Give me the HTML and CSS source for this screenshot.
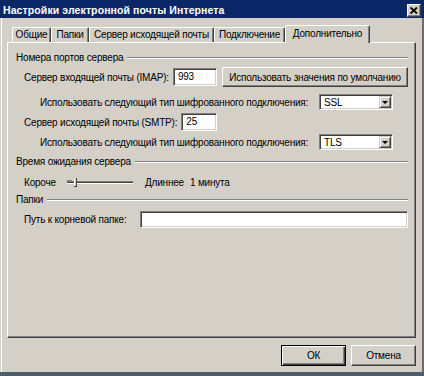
FILE: index.html
```html
<!DOCTYPE html>
<html lang="ru">
<head>
<meta charset="utf-8">
<title>Настройки электронной почты Интернета</title>
<link rel="stylesheet" href="styles.css">
</head>
<body>
<div class="window">
  <div class="titlebar">
    <span class="title">Настройки электронной почты Интернета</span>
    <span class="close">
      <svg width="8" height="7" viewBox="0 0 8 7"><path d="M0.5 0.5 L7 6.5 M7 0.5 L0.5 6.5" stroke="#000" stroke-width="1.8" fill="none"/></svg>
    </span>
  </div>
  <div class="content">
    <div class="tabs">
      <div class="tab t1">Общие</div>
      <div class="tab t2">Папки</div>
      <div class="tab t3">Сервер исходящей почты</div>
      <div class="tab t4">Подключение</div>
      <div class="tab t5 active">Дополнительно</div>
    </div>
    <div class="panel">
      <div class="group g1"><span>Номера портов сервера</span><i class="line"></i></div>
      <div class="row r-imap">
        <span class="label">Сервер входящей почты (IMAP):</span>
        <span class="input w44">993</span>
        <span class="btn wide">Использовать значения по умолчанию</span>
      </div>
      <div class="row r-enc1 enc">
        <span class="label">Использовать следующий тип шифрованного подключения:</span>
        <span class="select"><span class="val">SSL</span><span class="arrow"><i></i></span></span>
      </div>
      <div class="row r-smtp">
        <span class="label">Сервер исходящей почты (SMTP):</span>
        <span class="input w36">25</span>
      </div>
      <div class="row r-enc2 enc">
        <span class="label">Использовать следующий тип шифрованного подключения:</span>
        <span class="select"><span class="val">TLS</span><span class="arrow"><i></i></span></span>
      </div>
      <div class="group g2"><span>Время ожидания сервера</span><i class="line"></i></div>
      <div class="row r-slider">
        <span class="label short">Короче</span>
        <svg class="slider" width="66" height="12" viewBox="0 0 66 12">
          <rect x="0" y="5" width="66" height="1" fill="#808080"/>
          <rect x="0" y="6" width="66" height="1" fill="#404040"/>
          <rect x="0" y="7" width="66" height="1" fill="#ffffff"/>
          <rect x="0" y="4" width="5" height="1" fill="#808080"/>
          <rect x="7" y="2" width="3" height="8" fill="#d4d0c8"/>
          <rect x="7" y="2" width="1" height="8" fill="#ffffff"/>
          <rect x="9" y="2" width="1" height="8" fill="#404040"/>
          <rect x="7" y="10" width="3" height="1" fill="#404040"/>
        </svg>
        <span class="longer">Длиннее</span>
        <span class="minute">1 минута</span>
      </div>
      <div class="group g3"><span>Папки</span><i class="line"></i></div>
      <div class="row r-path">
        <span class="label">Путь к корневой папке:</span>
        <span class="input grow"></span>
      </div>
    </div>
    <div class="buttons">
      <span class="btn dlg default">ОК</span>
      <span class="btn dlg">Отмена</span>
    </div>
  </div>
</div>
</body>
</html>
```

FILE: styles.css
```css
html, body {
  margin: 0;
  padding: 0;
}
body {
  font-family: "Liberation Sans", Arial, sans-serif;
  font-size: 10px;
  letter-spacing: -0.2px;
  color: #000;
}
.window {
  width: 424px;
  height: 376px;
  box-sizing: border-box;
  background: #d4d0c8;
  display: flex;
  flex-direction: column;
  border-bottom: 4px solid #4e5d6a;
  overflow: hidden;
}
.titlebar {
  height: 18px;
  flex: none;
  background: #0c2768;
  display: flex;
  align-items: center;
  padding: 0 3px 0 3px;
  box-sizing: border-box;
}
.title {
  color: #fff;
  font-weight: bold;
  font-size: 10.5px;
  letter-spacing: 0.1px;
  flex: 1;
  padding-top: 1px;
}
.close {
  width: 14px;
  height: 13px;
  box-sizing: border-box;
  background: #d4d0c8;
  border: 1px solid;
  border-color: #fff #404040 #404040 #fff;
  box-shadow: inset -1px -1px #808080;
  display: flex;
  align-items: center;
  justify-content: center;
  margin-top: 3px;
}
.content {
  flex: 1;
  display: flex;
  flex-direction: column;
  padding: 0 6px 0 5px;
  border-left: 1px solid #fff;
  border-right: 2px solid #6c6c6c;
  margin-left: 1px;
}
.tabs {
  height: 24px;
  flex: none;
  display: flex;
  align-items: flex-end;
  padding-left: 5px;
  position: relative;
  z-index: 1;
}
.tab {
  box-sizing: border-box;
  height: 15px;
  line-height: 14px;
  text-align: center;
  border-top: 1px solid #fff;
  border-left: 1px solid #fff;
  border-right: 1px solid #404040;
  box-shadow: inset -1px 0 #808080;
  border-radius: 2px 2px 0 0;
  white-space: nowrap;
}
.t1 { width: 39px; }
.t2 { width: 38px; }
.t3 { width: 125px; }
.t4 { width: 71px; }
.tab.active {
  width: 85px;
  height: 18px;
  line-height: 16px;
  margin: 0 0 -1px 0;
  background: #d4d0c8;
}
.panel {
  height: 296px;
  box-sizing: border-box;
  border: 1px solid;
  border-color: #fff #404040 #404040 #fff;
  box-shadow: inset -1px -1px #808080;
  padding: 8px 7px 0 8px;
  display: flex;
  flex-direction: column;
}
.group {
  height: 13px;
  display: flex;
  align-items: center;
  white-space: nowrap;
}
.group .line {
  flex: 1;
  height: 0;
  border-top: 1px solid #808080;
  border-bottom: 1px solid #fff;
  margin-left: 4px;
}
.g2 { margin-top: 5px; }
.g3 { margin-top: 3px; }
.row {
  display: flex;
  align-items: center;
  padding-left: 8px;
  white-space: nowrap;
}
.row .label { margin-right: 4px; }
.r-imap { margin-top: 3px; height: 20px; }
.r-enc1 { margin-top: 7px; height: 16px; }
.r-smtp { margin-top: 3px; height: 18px; }
.r-enc2 { margin-top: 3px; height: 16px; }
.r-slider { margin-top: 6px; height: 16px; }
.r-path { margin-top: 5px; height: 16px; }
.r-path .label { margin-right: 13px; }
.enc { padding-left: 24px; }
.input {
  box-sizing: border-box;
  height: 18px;
  background: #fff;
  border: 1px solid;
  border-color: #808080 #fff #fff #808080;
  box-shadow: inset 1px 1px #404040, inset -1px -1px #d4d0c8;
  padding-left: 4px;
  line-height: 16px;
}
.w44 { width: 44px; }
.w36 { width: 36px; }
.r-path .input { height: 17px; }
.grow { flex: 1; }
.btn {
  box-sizing: border-box;
  background: #d4d0c8;
  border: 1px solid;
  border-color: #fff #404040 #404040 #fff;
  box-shadow: inset -1px -1px #808080;
  display: flex;
  align-items: center;
  justify-content: center;
}
.btn.wide {
  width: 186px;
  height: 20px;
  margin-left: auto;
}
.select {
  margin-left: auto;
  margin-right: 15px;
  width: 74px;
  height: 16px;
  box-sizing: border-box;
  background: #fff;
  border: 1px solid;
  border-color: #808080 #fff #fff #808080;
  box-shadow: inset 1px 1px #404040, inset -1px -1px #d4d0c8;
  display: flex;
  align-items: center;
  padding: 1px;
}
.select .val {
  flex: 1;
  padding-left: 3px;
}
.select .arrow {
  width: 12px;
  height: 12px;
  box-sizing: border-box;
  background: #d4d0c8;
  border: 1px solid;
  border-color: #d4d0c8 #404040 #404040 #d4d0c8;
  box-shadow: inset 1px 1px #fff, inset -1px -1px #808080;
  display: flex;
  align-items: center;
  justify-content: center;
}
.select .arrow i {
  width: 0;
  height: 0;
  border-left: 3px solid transparent;
  border-right: 3px solid transparent;
  border-top: 3px solid #000;
}
.label.short { width: 43px; margin-right: 0; }
.slider { flex: none; }
.longer { margin-left: 12px; }
.minute { margin-left: 6px; }
.buttons {
  display: flex;
  justify-content: flex-end;
  gap: 5px;
  margin-top: 7px;
}
.btn.dlg {
  width: 65px;
  height: 21px;
}
.btn.default {
  border: 1px solid #000;
  box-shadow: inset 1px 1px #fff, inset -1px -1px #404040, inset -2px -2px #808080;
}
```
